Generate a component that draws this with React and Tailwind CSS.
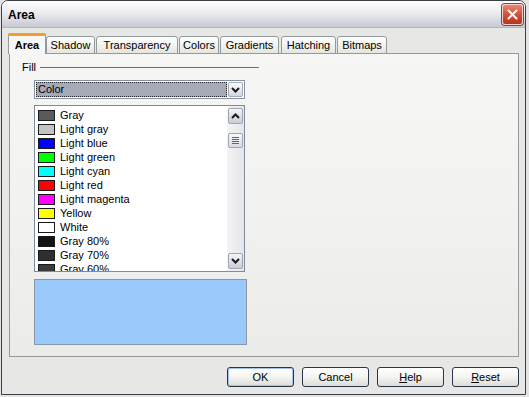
import React from "react";

const colors = [
  ["Gray", "#5a5a5a"],
  ["Light gray", "#c4c4c4"],
  ["Light blue", "#0000ff"],
  ["Light green", "#00ff00"],
  ["Light cyan", "#00ffff"],
  ["Light red", "#ff0000"],
  ["Light magenta", "#ff00ff"],
  ["Yellow", "#ffff00"],
  ["White", "#ffffff"],
  ["Gray 80%", "#141414"],
  ["Gray 70%", "#2e2e2e"],
  ["Gray 60%", "#3c3c3c"],
];

const tabs = [
  ["Shadow", "w-[49px] ml-0"],
  ["Transparency", "w-[82px] ml-[1px]"],
  ["Colors", "w-[40px] ml-[1px]"],
  ["Gradients", "w-[59px] ml-[1px]"],
  ["Hatching", "w-[55px] ml-[2px]"],
  ["Bitmaps", "w-[50px] ml-[1px]"],
];

function Chevron({ up }) {
  return (
    <svg width="9" height="6" viewBox="0 0 9 6">
      <polyline
        points={up ? "1,5 4.5,1.5 8,5" : "1,1 4.5,4.5 8,1"}
        fill="none"
        stroke="#1a1a1a"
        strokeWidth="2"
      />
    </svg>
  );
}

function ScrollBtn({ up }) {
  return (
    <div className="w-[15px] h-[16px] rounded-[2px] border border-[#9fa6b3] bg-gradient-to-b from-[#f4f5f8] to-[#c9ccd6] flex items-center justify-center">
      <Chevron up={up} />
    </div>
  );
}

function Btn({ children, def }) {
  return (
    <div
      className={
        "w-[67px] h-[20px] rounded-[3px] border border-[#2a3548] bg-gradient-to-b from-[#ffffff] via-[#f4f4f2] to-[#dcdcd8] flex items-center justify-center text-[11px] text-black " +
        (def ? "shadow-[inset_0_0_0_1px_#a9c0e6]" : "")
      }
    >
      {children}
    </div>
  );
}

export default function App() {
  return (
    <div
      className="w-[529px] h-[397px] bg-[#e4e4e4] pl-[1px] overflow-hidden"
      style={{ fontFamily: '"Liberation Sans", Arial, sans-serif' }}
    >
      <div className="w-[525px] h-[395px] border border-[#3e3e46] rounded-t-[7px] overflow-hidden flex flex-col">
        {/* title bar */}
        <div className="h-[27px] shrink-0 flex items-center justify-between pl-[6px] pr-[2px] bg-gradient-to-b from-[#fefefe] via-[#e9e9ef] to-[#c8c8d4] border-b border-[#b5b5c0]">
          <span className="text-[12px] font-bold text-black leading-none mt-[1px]">Area</span>
          <div className="w-[21px] h-[21px] rounded-[3px] border border-[#f0d4cc] bg-gradient-to-b from-[#e9866f] via-[#d4503a] to-[#b8321f] flex items-center justify-center shadow-[0_0_0_1px_#9b3a2e]">
            <svg width="11" height="11" viewBox="0 0 11 11">
              <path d="M1.5 1.5 L9.5 9.5 M9.5 1.5 L1.5 9.5" stroke="#fff" strokeWidth="2" strokeLinecap="round" />
            </svg>
          </div>
        </div>
        {/* body */}
        <div className="flex-1 bg-[#e7e7e5] pl-[7px] pr-[6px] pt-[6px] pb-[6px] flex flex-col">
          {/* tabs */}
          <div className="flex items-end h-[20px] relative z-10 -mb-px">
            <div className="w-[38px] h-[21px] -ml-px rounded-t-[3px] border border-[#919b9c] border-b-0 bg-[#f7f7f5] flex flex-col">
              <div className="h-[3px] bg-[#f0a030] rounded-t-[2px] -mx-px -mt-px"></div>
              <div className="flex-1 flex items-center justify-center text-[11px] font-bold text-black">Area</div>
            </div>
            {tabs.map(([t, w]) => (
              <div
                key={t}
                className={
                  w +
                  " h-[18px] rounded-t-[3px] border border-[#919b9c] bg-gradient-to-b from-[#ffffff] to-[#e6e6e0] flex items-center justify-center text-[11px] text-black"
                }
              >
                {t}
              </div>
            ))}
          </div>
          {/* panel */}
          <div className="w-[510px] h-[304px] border border-[#919b9c] bg-gradient-to-b from-[#f6f6f4] via-[#f2f2f0] to-[#ebebe8] pl-[12px] pt-[6px]">
            <div className="flex items-center h-[14px] gap-[4px]">
              <span className="text-[11px] text-black">Fill</span>
              <div className="w-[219px] h-px bg-[#6e6e6e]"></div>
            </div>
            <div className="ml-[12px] mt-[6px] w-[211px] flex flex-col">
              {/* dropdown */}
              <div className="h-[19px] border border-[#8592a4] bg-white p-px flex">
                <div className="flex-1 border border-dotted border-[#222] bg-[#a6a9b7] flex items-center pl-[1px] text-[11px] text-black">
                  Color
                </div>
                <div className="w-[15px] ml-px rounded-[2px] border border-[#a4abb8] bg-gradient-to-b from-[#fafbfc] to-[#d4d7df] flex items-center justify-center">
                  <Chevron />
                </div>
              </div>
              {/* list */}
              <div className="mt-[6px] h-[167px] border border-[#7f8a9c] bg-white flex overflow-hidden">
                <div className="flex-1 pl-[3px] pt-[2px] overflow-hidden">
                  {colors.map(([n, c]) => (
                    <div key={n} className="h-[14px] flex items-center gap-[5px]">
                      <div className="w-[17px] h-[11px] border border-[#1a1a1a]" style={{ background: c }}></div>
                      <span className="text-[11px] text-black leading-none">{n}</span>
                    </div>
                  ))}
                </div>
                <div className="w-[17px] bg-gradient-to-r from-[#f3f3f5] to-[#e6e6ea] flex flex-col items-center py-[2px]">
                  <ScrollBtn up />
                  <div className="mt-[9px] w-[15px] h-[15px] rounded-[2px] border border-[#9fa6b3] bg-gradient-to-b from-[#f7f8fa] to-[#d8dbe2] flex flex-col items-center justify-center gap-[1px]">
                    <div className="w-[7px] h-px bg-[#666]"></div>
                    <div className="w-[7px] h-px bg-[#666]"></div>
                    <div className="w-[7px] h-px bg-[#666]"></div>
                    <div className="w-[7px] h-px bg-[#666]"></div>
                  </div>
                  <div className="flex-1"></div>
                  <ScrollBtn />
                </div>
              </div>
              {/* preview */}
              <div className="mt-[7px] w-[213px] h-[66px] border border-[#8a97a8] bg-[#99c9fb]"></div>
            </div>
          </div>
          {/* buttons */}
          <div className="mt-[10px] flex justify-end gap-[8px] pr-[0px]">
            <Btn def>OK</Btn>
            <Btn>Cancel</Btn>
            <Btn>
              <span><span className="underline">H</span>elp</span>
            </Btn>
            <Btn>
              <span><span className="underline">R</span>eset</span>
            </Btn>
          </div>
        </div>
      </div>
    </div>
  );
}
